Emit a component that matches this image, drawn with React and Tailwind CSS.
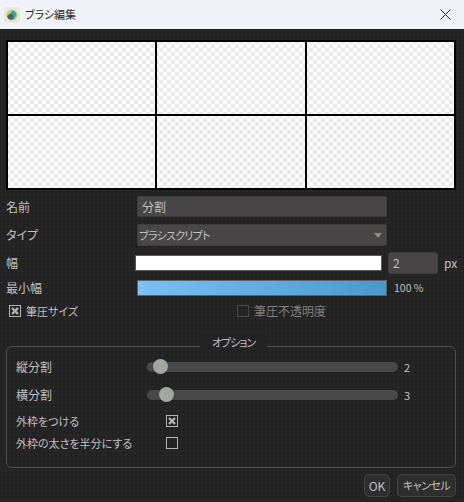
const font = { fontFamily: '"Noto Sans CJK JP", sans-serif' }

const checker =
  'bg-white bg-[conic-gradient(#e9e9e9_25%,#ffffff_0_50%,#e9e9e9_0_75%,#ffffff_0)] bg-[length:8px_8px] bg-[position:2px_2px]'

function Cell({ right, bottom }) {
  return (
    <div
      className={`${checker} border-black ${right ? 'border-r-2' : ''} ${bottom ? 'border-b-2' : ''}`}
    />
  )
}

function CheckMark({ checked, disabled, className = '' }) {
  return (
    <span
      className={`flex h-[12px] w-[12px] shrink-0 items-center justify-center border ${
        disabled ? 'border-[#484848]' : 'border-[#b4b4b4]'
      } ${className}`}
    >
      {checked && (
        <svg width="8" height="8" viewBox="0 0 8 8">
          <path d="M1 1 L7 7 M7 1 L1 7" stroke="#b4b4b4" strokeWidth="2.4" />
        </svg>
      )}
    </span>
  )
}

function Slider({ label, value, thumb }) {
  return (
    <div className="flex h-[28px] items-center">
      <span className="w-[131px]">{label}</span>
      <div className="relative h-[10px] w-[251px] rounded-full bg-[#484848]">
        <span
          className="absolute top-[-3px] h-[15px] w-[15px] rounded-full bg-[#a3a5a0]"
          style={{ left: thumb }}
        />
      </div>
      <span className="ml-[6px] text-[11px]">{value}</span>
    </div>
  )
}

export default function App() {
  return (
    <div
      className="flex h-[502px] w-[464px] flex-col overflow-hidden bg-[#232323] text-[12px] text-[#c0c0c0] [font-feature-settings:'palt']"
      style={font}
    >
      {/* title bar */}
      <div className="flex h-[29px] items-center bg-[#f0f2f8] pl-[4px] pr-[13px] text-[#2a2a2a]">
        <span className="flex h-[16px] w-[16px] items-center justify-center rounded-[3px] bg-[#e6e8e6]">
          <svg width="12" height="12" viewBox="0 0 12 12">
            <circle cx="6" cy="6" r="5.5" fill="#c8d84a" />
            <path d="M6 1.5 A4.5 4.5 0 0 1 10.5 6 L8 10.5 L3 9 Z" fill="#29a8d8" />
            <path d="M1 7 L5 4 L8 7 L6 11 L2.5 10 Z" fill="#5a5a62" />
          </svg>
        </span>
        <span className="ml-[5px] text-[11px]">ブラシ編集</span>
        <svg className="ml-auto" width="11" height="11" viewBox="0 0 11 11">
          <path d="M0.5 0.5 L10.5 10.5 M10.5 0.5 L0.5 10.5" stroke="#222" strokeWidth="1" />
        </svg>
      </div>

      <div className="flex flex-1 flex-col bg-[radial-gradient(#272727_1px,transparent_1px)] bg-[length:4px_4px] pl-[6px] pr-[8px] pt-[11px]">
        {/* brush preview */}
        <div className="grid h-[150px] w-[450px] grid-cols-[149px_150px_1fr] grid-rows-[74px_1fr] border-2 border-black">
          <Cell right bottom />
          <Cell right bottom />
          <Cell bottom />
          <Cell right />
          <Cell right />
          <Cell />
        </div>

        {/* name */}
        <div className="mt-[6px] flex h-[21px] items-center">
          <span className="w-[131px]">名前</span>
          <div className="flex h-full w-[250px] items-center rounded-[2px] border border-[#3d3d3d] bg-[#484646] px-[4px]">
            分割
          </div>
        </div>

        {/* type */}
        <div className="mt-[7px] flex h-[22px] items-center">
          <span className="w-[131px]">タイプ</span>
          <div className="relative flex h-full w-[250px] items-center rounded-[2px] border border-[#3d3d3d] bg-[#484646] pl-[1px]">
            <span className="text-[11px] tracking-[-0.7px]">ブラシスクリプト</span>
            <span className="absolute right-[4px] top-[8px] h-0 w-0 border-x-[4px] border-t-[5px] border-x-transparent border-t-[#8a9088]" />
          </div>
        </div>

        {/* width */}
        <div className="mt-[6px] flex h-[22px] items-center">
          <span className="w-[129px] shrink-0">幅</span>
          <div className="h-[16px] w-[247px] shrink-0 border border-[#5a5a5a] bg-white" />
          <div className="ml-[6px] flex h-full w-[50px] shrink-0 items-center rounded-[3px] border border-[#3d3d3d] bg-[#484646] px-[4px]">
            2
          </div>
          <span className="ml-[6px] shrink-0">px</span>
        </div>

        {/* min width */}
        <div className="mt-[6px] flex h-[16px] items-center">
          <span className="w-[131px]">最小幅</span>
          <div className="h-full w-[250px] border border-[#5a6268] bg-[linear-gradient(to_right,#78c0f5,#4b97cc)]" />
          <span className="ml-[7px] text-[10.5px]">100 %</span>
        </div>

        {/* pressure */}
        <div className="mt-[8px] flex h-[14px] items-center">
          <CheckMark checked className="ml-[3px]" />
          <span className="ml-[5px] w-[211px] text-[11px]">筆圧サイズ</span>
          <CheckMark disabled />
          <span className="ml-[5px] text-[#808080]">筆圧不透明度</span>
        </div>

        {/* options group */}
        <div className="relative mt-[28px] h-[122px] w-[450px] rounded-[6px] border border-[#4c4c4c] px-[9px] pt-[6px]">
          <span className="absolute left-[193px] top-[-15px] w-[67px] bg-[#232323] text-center text-[11px] leading-[20px] tracking-[-1px]">
            オプション
          </span>
          <Slider label="縦分割" value="2" thumb={6} />
          <Slider label="横分割" value="3" thumb={12} />
          <div className="mt-[1px] flex h-[22px] items-center">
            <span className="w-[150px] text-[11px]">外枠をつける</span>
            <CheckMark checked />
          </div>
          <div className="flex h-[22px] items-center">
            <span className="w-[150px] text-[11px]">外枠の太さを半分にする</span>
            <CheckMark />
          </div>
        </div>

        {/* footer buttons */}
        <div className="mt-[6px] flex justify-end gap-[7px]">
          <button className="h-[23px] w-[26px] rounded-[5px] border border-[#444] bg-[#2e2e2e]">
            OK
          </button>
          <button className="h-[23px] w-[59px] rounded-[5px] border border-[#444] bg-[#2e2e2e] text-[11px] tracking-[-0.5px]">
            キャンセル
          </button>
        </div>
      </div>
    </div>
  )
}
